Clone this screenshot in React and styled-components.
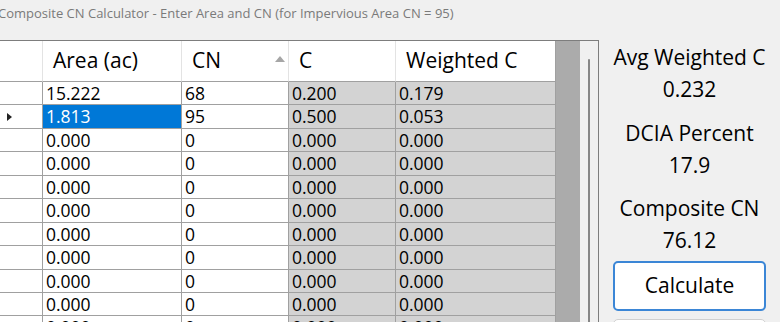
import styled, { createGlobalStyle } from 'styled-components';

const GlobalStyle = createGlobalStyle`
  html, body {
    margin: 0;
    padding: 0;
    background: #f0f0f0;
    overflow: hidden;
  }
  body {
    font-family: "Open Sans", "Noto Sans", sans-serif;
  }
`;

const Window = styled.div`
  width: 780px;
  height: 322px;
  overflow: hidden;
  display: flex;
  flex-direction: column;
  background: #f0f0f0;
`;

const TitleBar = styled.div`
  height: 40px;
  flex: none;
  padding-top: 3px;
  box-sizing: border-box;
  font-size: 13px;
  line-height: 20px;
  color: #7a7a7a;
  white-space: nowrap;
  text-indent: -2px;
`;

const Main = styled.div`
  flex: 1;
  display: flex;
  min-height: 0;
`;

const GridFrame = styled.div`
  width: 599px;
  flex: none;
  display: flex;
  border-top: 1px solid #7d7d7d;
  border-right: 1px solid #7d7d7d;
  box-sizing: border-box;
  overflow: hidden;
`;

const Table = styled.div`
  width: 556px;
  flex: none;
  background: #ababab;
`;

const COLS = '43px 139px 107px 107px 160px';

const HeaderRow = styled.div`
  display: grid;
  grid-template-columns: ${COLS};
  height: 41px;
`;

const HeaderCell = styled.div`
  background: #fff;
  border-right: 1px solid #e3e3e3;
  border-bottom: 1px solid #a0a0a0;
  box-sizing: border-box;
  display: flex;
  align-items: center;
  justify-content: space-between;
  padding: 0 10px 2px 10px;
  font-size: 21px;
  color: #000;
  &:last-child {
    border-right-color: #a0a0a0;
  }
`;

const SortGlyph = styled.svg`
  width: 10px;
  height: 6px;
  margin-right: -7px;
  margin-bottom: 2px;
`;

const Row = styled.div`
  display: grid;
  grid-template-columns: ${COLS};
  height: 23.45px;
`;

const Cell = styled.div`
  background: ${p => (p.$selected ? '#0078d7' : p.$readonly ? '#d3d3d3' : '#fff')};
  color: ${p => (p.$selected ? '#fff' : '#000')};
  border-right: 1px solid #a0a0a0;
  border-bottom: 1px solid #a0a0a0;
  box-sizing: border-box;
  font-size: 17.5px;
  line-height: 22px;
  padding-left: 3px;
  white-space: nowrap;
  overflow: hidden;
`;

const RowHeader = styled.div`
  background: #fff;
  border-right: 1px solid #a0a0a0;
  border-bottom: 1px solid #a0a0a0;
  box-sizing: border-box;
  display: flex;
  align-items: center;
  padding-left: 7px;
`;

const Workspace = styled.div`
  width: 24px;
  flex: none;
  background: #ababab;
`;

const ScrollTrack = styled.div`
  flex: 1;
  background: #f0f0f0;
  display: flex;
  justify-content: center;
  padding-top: 18px;
`;

const ScrollThumb = styled.div`
  width: 2px;
  height: 400px;
  background: #868686;
  border-radius: 1px;
  margin-left: -1px;
`;

const Panel = styled.div`
  flex: 1;
  display: flex;
  flex-direction: column;
  align-items: center;
  padding-top: 1px;
`;

const Label = styled.div`
  font-size: 21px;
  line-height: 32px;
  color: #000;
  margin-top: ${p => p.$gap || 0}px;
  white-space: nowrap;
`;

const Value = styled.div`
  font-size: 21px;
  line-height: 32px;
  color: #000;
`;

const Button = styled.button`
  margin-top: ${p => p.$gap || 0}px;
  width: 153px;
  height: 50px;
  flex: none;
  background: #fff;
  border: ${p => (p.$primary ? '2px solid #3b86d6' : '1px solid #d0d0d0')};
  border-radius: 5px;
  font-family: inherit;
  font-size: 21px;
  color: #000;
  padding: 0 0 2px;
`;

const rows = [
  ['15.222', '68', '0.200', '0.179'],
  ['1.813', '95', '0.500', '0.053'],
  ...Array.from({ length: 10 }, () => ['0.000', '0', '0.000', '0.000']),
];

const Arrow = () => (
  <svg width="5" height="8" viewBox="0 0 5 8">
    <path d="M0 0 L5 4 L0 8 Z" fill="#222" />
  </svg>
);

export default function App() {
  return (
    <>
      <GlobalStyle />
      <Window>
        <TitleBar>Composite CN Calculator - Enter Area and CN (for Impervious Area CN = 95)</TitleBar>
        <Main>
          <GridFrame>
            <Table>
              <HeaderRow>
                <HeaderCell />
                <HeaderCell>Area (ac)</HeaderCell>
                <HeaderCell>
                  CN
                  <SortGlyph viewBox="0 0 10 6">
                    <path d="M0 6 L5 0 L10 6 Z" fill="#a6a6a6" />
                  </SortGlyph>
                </HeaderCell>
                <HeaderCell>C</HeaderCell>
                <HeaderCell>Weighted C</HeaderCell>
              </HeaderRow>
              {rows.map((r, i) => (
                <Row key={i}>
                  <RowHeader>{i === 1 && <Arrow />}</RowHeader>
                  <Cell $selected={i === 1}>{r[0]}</Cell>
                  <Cell>{r[1]}</Cell>
                  <Cell $readonly>{r[2]}</Cell>
                  <Cell $readonly>{r[3]}</Cell>
                </Row>
              ))}
            </Table>
            <Workspace />
            <ScrollTrack>
              <ScrollThumb />
            </ScrollTrack>
          </GridFrame>
          <Panel>
            <Label>Avg Weighted C</Label>
            <Value>0.232</Value>
            <Label $gap={12}>DCIA Percent</Label>
            <Value>17.9</Value>
            <Label $gap={11}>Composite CN</Label>
            <Value>76.12</Value>
            <Button $primary $gap={5}>Calculate</Button>
            <Button $gap={8} />
          </Panel>
        </Main>
      </Window>
    </>
  );
}
